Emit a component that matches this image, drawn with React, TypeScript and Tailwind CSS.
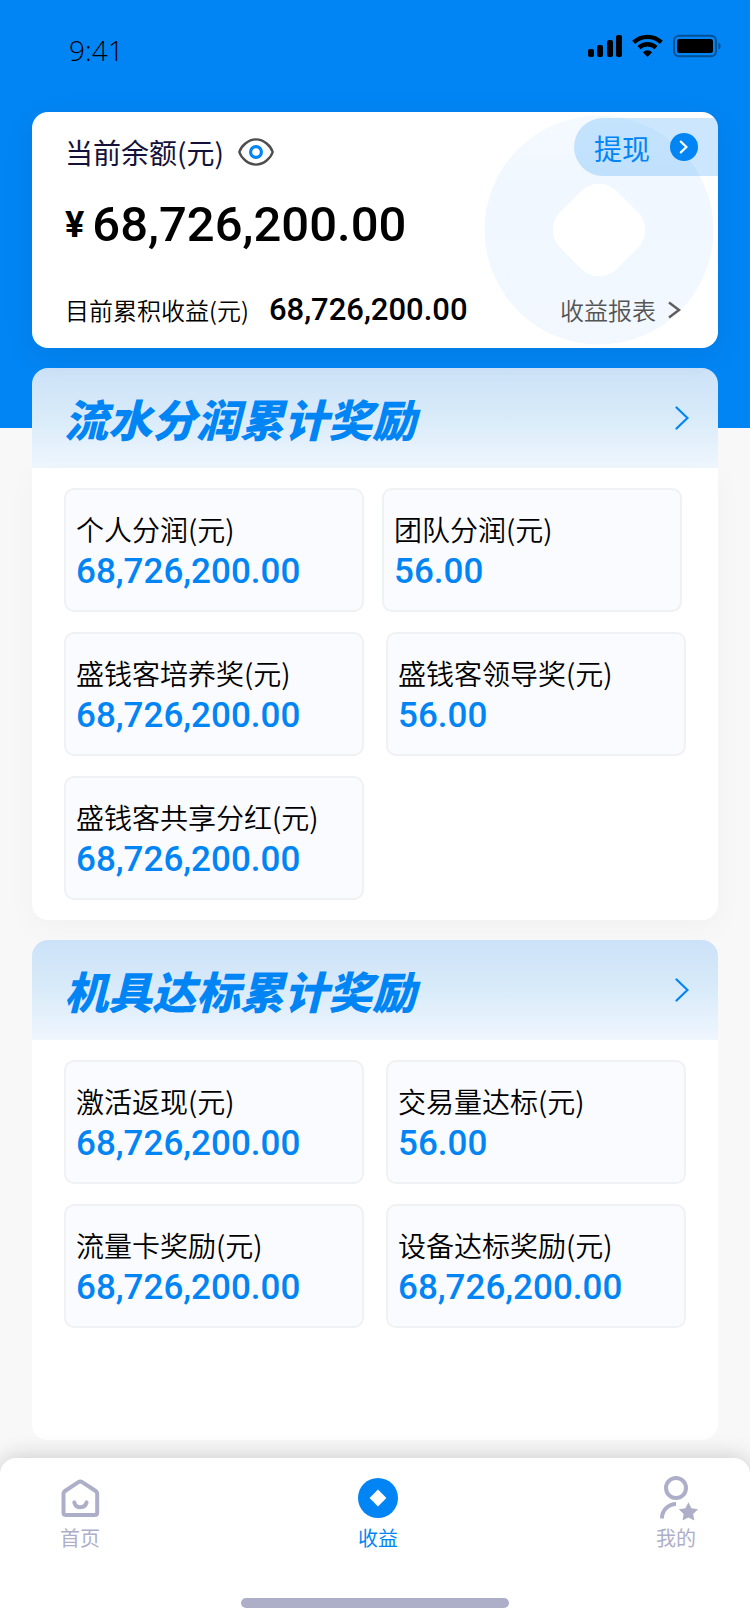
import React from 'react';

type Reward = { label: string; amount: string };

const flowRewards: Reward[][] = [
  [
    { label: '个人分润(元)', amount: '68,726,200.00' },
    { label: '团队分润(元)', amount: '56.00' },
  ],
  [
    { label: '盛钱客培养奖(元)', amount: '68,726,200.00' },
    { label: '盛钱客领导奖(元)', amount: '56.00' },
  ],
  [{ label: '盛钱客共享分红(元)', amount: '68,726,200.00' }],
];

const deviceRewards: Reward[][] = [
  [
    { label: '激活返现(元)', amount: '68,726,200.00' },
    { label: '交易量达标(元)', amount: '56.00' },
  ],
  [
    { label: '流量卡奖励(元)', amount: '68,726,200.00' },
    { label: '设备达标奖励(元)', amount: '68,726,200.00' },
  ],
];

const StatusBar: React.FC = () => (
  <div className="flex h-28 items-start justify-between pt-[34px] pl-[69px] pr-[29px] text-black">
    <span className="font-['Open_Sans',sans-serif] text-[28px] leading-8 font-[350]">9:41</span>
    <div className="flex items-center gap-[10px]">
      <svg width="34" height="24" viewBox="0 0 34 24">
        <rect x="0" y="15" width="6" height="8" rx="2" />
        <rect x="9" y="11" width="6" height="12" rx="2" />
        <rect x="19" y="6" width="6" height="17" rx="2" />
        <rect x="28" y="1" width="6" height="22" rx="2" />
      </svg>
      <svg width="31" height="24" viewBox="0 0 31 24" fill="none" stroke="#000" strokeWidth="4.4">
        <path d="M1.7 8.4A20 20 0 0 1 29.3 8.4" />
        <path d="M7 13.6A12.4 12.4 0 0 1 24 13.6" />
        <path d="M15.5 23L10.8 18.2A7.4 7.4 0 0 1 20.2 18.2Z" fill="#000" stroke="none" />
      </svg>
      <svg width="48" height="24" viewBox="0 0 48 24">
        <rect x="1" y="1.8" width="42" height="20.4" rx="5" fill="none" stroke="#000" strokeOpacity="0.4" strokeWidth="2" />
        <rect x="4" y="5" width="36" height="14" rx="2.5" />
        <path d="M45.5 8.5C48.3 10 48.3 14 45.5 15.5Z" fillOpacity="0.45" />
      </svg>
    </div>
  </div>
);

const BalanceCard: React.FC = () => (
  <section className="relative z-10 mx-8 overflow-hidden rounded-2xl bg-white pt-[6px] pb-[18px] shadow-[0_8px_32px_rgba(0,0,0,0.07)]">
    <svg className="absolute top-[3px] right-1" width="230" height="230" viewBox="0 0 230 230">
      <defs>
        <linearGradient id="coin" x1="0" y1="0" x2="0" y2="1">
          <stop offset="0" stopColor="#f5faff" />
          <stop offset="0.3" stopColor="#f0f7fe" />
          <stop offset="1" stopColor="#f2f8fe" />
        </linearGradient>
      </defs>
      <circle cx="115" cy="115" r="114.5" fill="url(#coin)" />
      <rect x="75" y="75" width="80" height="80" rx="25" fill="#fff" transform="rotate(45 115 115)" />
    </svg>

    <div className="relative flex items-end justify-between pl-[33px]">
      <div className="flex items-center gap-[14px] pb-[2px]">
        <span className="text-[28px] leading-[44px] text-[#14123a]">当前余额(元)</span>
        <button type="button" aria-label="显示余额">
          <svg width="36" height="28" viewBox="0 0 36 28" fill="none">
            <path d="M1.3 14C3.2 8 10 1.4 18 1.4S32.8 8 34.7 14C32.8 20 26 26.6 18 26.6S3.2 20 1.3 14Z" stroke="#4d4d4d" strokeWidth="2.4" />
            <circle cx="18" cy="14" r="5.4" stroke="#0285f4" strokeWidth="3.2" />
          </svg>
        </button>
      </div>
      <button type="button" className="flex h-[58px] items-center gap-5 rounded-l-full bg-[#0285f4]/20 pr-5 pl-5 text-[#0285f4]">
        <span className="pt-[2px] text-[28px] leading-10">提现</span>
        <svg width="28" height="28" viewBox="0 0 28 28" fill="none">
          <circle cx="14" cy="14" r="14" fill="#0285f4" />
          <path d="M10.8 8.6L16.4 14L10.8 19.4" stroke="#fff" strokeWidth="2.2" strokeLinecap="round" />
        </svg>
      </button>
    </div>

    <div className="relative mt-5 flex items-center gap-2 pl-[33px] font-['Roboto',sans-serif] leading-[58px] text-black">
      <span className="text-[36px] font-bold">¥</span>
      <span className="text-[49px] font-medium">68,726,200.00</span>
    </div>

    <div className="relative mt-9 flex items-center justify-between pr-[37px] pl-[33px] leading-10">
      <div className="flex items-center gap-5 text-black">
        <span className="text-2xl leading-10 font-[350]">目前累积收益(元)</span>
        <span className="font-['Roboto',sans-serif] text-[31px] leading-10 font-medium">68,726,200.00</span>
      </div>
      <a href="#report" className="flex items-center gap-3 text-2xl leading-10 font-[350] text-[#555]">
        收益报表
        <svg width="13" height="18" viewBox="0 0 13 18" fill="none" stroke="#5e5e5e" strokeWidth="2.4">
          <path d="M1 1.5L11 9L1 16.5" />
        </svg>
      </a>
    </div>
  </section>
);

const RewardCell: React.FC<Reward> = ({ label, amount }) => (
  <div className="h-[124px] flex-1 rounded-[10px] border-2 border-[#f0f1f3] bg-[#fafbfe] px-[10px] pt-[19px]">
    <p className="text-[28px] leading-10 font-[350] text-black">{label}</p>
    <p className="font-['Roboto',sans-serif] text-[35px] leading-[46px] font-medium text-[#0285f4]">{amount}</p>
  </div>
);

const RewardSection: React.FC<{ title: string; children: React.ReactNode }> = ({ title, children }) => (
  <>
    <a
      href="#detail"
      className="mx-8 mt-5 flex h-[100px] items-center justify-between rounded-t-2xl bg-linear-to-b from-[#cce2f8] via-[#d9ebf9] to-[#eff6fe] pr-[29px] pl-8 text-[#0285f4]"
    >
      <h2 className="text-[44px] leading-[60px] font-black italic">{title}</h2>
      <svg width="14" height="24" viewBox="0 0 14 24" fill="none" stroke="#0285f4" strokeWidth="2.2" strokeLinecap="round">
        <path d="M1.5 1.5L12.5 12L1.5 22.5" />
      </svg>
    </a>
    {children}
  </>
);

const TabBar: React.FC = () => (
  <nav className="relative mt-[18px] rounded-t-2xl bg-white pt-4 pb-4 shadow-[0_0_24px_rgba(0,0,0,0.2)]">
    <div className="flex justify-between pr-[50px] pl-14 text-xl leading-7 text-[#adafc8]">
      <button type="button" className="flex w-12 flex-col items-center gap-[2px]">
        <svg width="48" height="48" viewBox="0 0 48 48" fill="none" stroke="#adafc8" strokeWidth="4" strokeLinecap="round">
          <path d="M7.5 19.8Q7.5 18 9 17L22.4 8.2Q24.3 6.9 26.2 8.2L39.7 17Q41.2 18 41.2 19.8V38.5Q41.2 41 38.7 41H10Q7.5 41 7.5 38.5Z" />
          <path d="M18.3 28.4C20 34.8 28.8 34.8 30.6 28.4" />
        </svg>
        首页
      </button>
      <button type="button" aria-current="page" className="flex w-12 flex-col items-center gap-[2px] text-[#0285f4]">
        <svg width="48" height="48" viewBox="0 0 48 48">
          <circle cx="24" cy="24" r="20" fill="#0285f4" />
          <path d="M24 15.6L32.4 24L24 32.4L15.6 24Z" fill="#fff" />
        </svg>
        收益
      </button>
      <button type="button" className="flex w-12 flex-col items-center gap-[2px]">
        <svg width="48" height="48" viewBox="0 0 48 48" fill="none" stroke="#adafc8" strokeWidth="4">
          <circle cx="24" cy="14" r="10" />
          <path d="M10 44.5V44A14 14 0 0 1 24 30" />
          <path
            d="M36.4 28.3L39.4 34.2L46 35.2L41.2 39.9L42.3 46.4L36.4 43.6L30.5 46.4L31.6 39.9L26.8 35.2L33.4 34.2Z"
            fill="#adafc8"
            stroke="none"
          />
        </svg>
        我的
      </button>
    </div>
    <div className="mx-auto mt-[46px] h-[10px] w-[268px] rounded-full bg-[#adafc8]" />
  </nav>
);

export default function App() {
  return (
    <div className="flex min-h-screen flex-col overflow-hidden bg-[linear-gradient(to_bottom,#0285f4_428px,#f8f8f8_428px)] font-['Noto_Sans_CJK_SC',sans-serif]">
      <StatusBar />
      <main className="flex-1">
        <BalanceCard />

        <RewardSection title="流水分润累计奖励">
          <div className="mx-8 space-y-5 rounded-b-2xl bg-white px-8 py-5 shadow-[0_8px_32px_rgba(0,0,0,0.03)]">
            <div className="flex gap-[18px] pr-1">
              {flowRewards[0].map((item) => (
                <RewardCell key={item.label} {...item} />
              ))}
            </div>
            {flowRewards.slice(1).map((row) => (
              <div key={row[0].label} className="flex gap-[22px]">
                {row.map((item) => (
                  <RewardCell key={item.label} {...item} />
                ))}
                {row.length === 1 && <div className="flex-1 px-3" />}
              </div>
            ))}
          </div>
        </RewardSection>

        <RewardSection title="机具达标累计奖励">
          <div className="mx-8 min-h-[400px] space-y-5 rounded-b-2xl bg-white px-8 py-5">
            {deviceRewards.map((row) => (
              <div key={row[0].label} className="flex gap-[22px]">
                {row.map((item) => (
                  <RewardCell key={item.label} {...item} />
                ))}
              </div>
            ))}
          </div>
        </RewardSection>
      </main>
      <TabBar />
    </div>
  );
}
